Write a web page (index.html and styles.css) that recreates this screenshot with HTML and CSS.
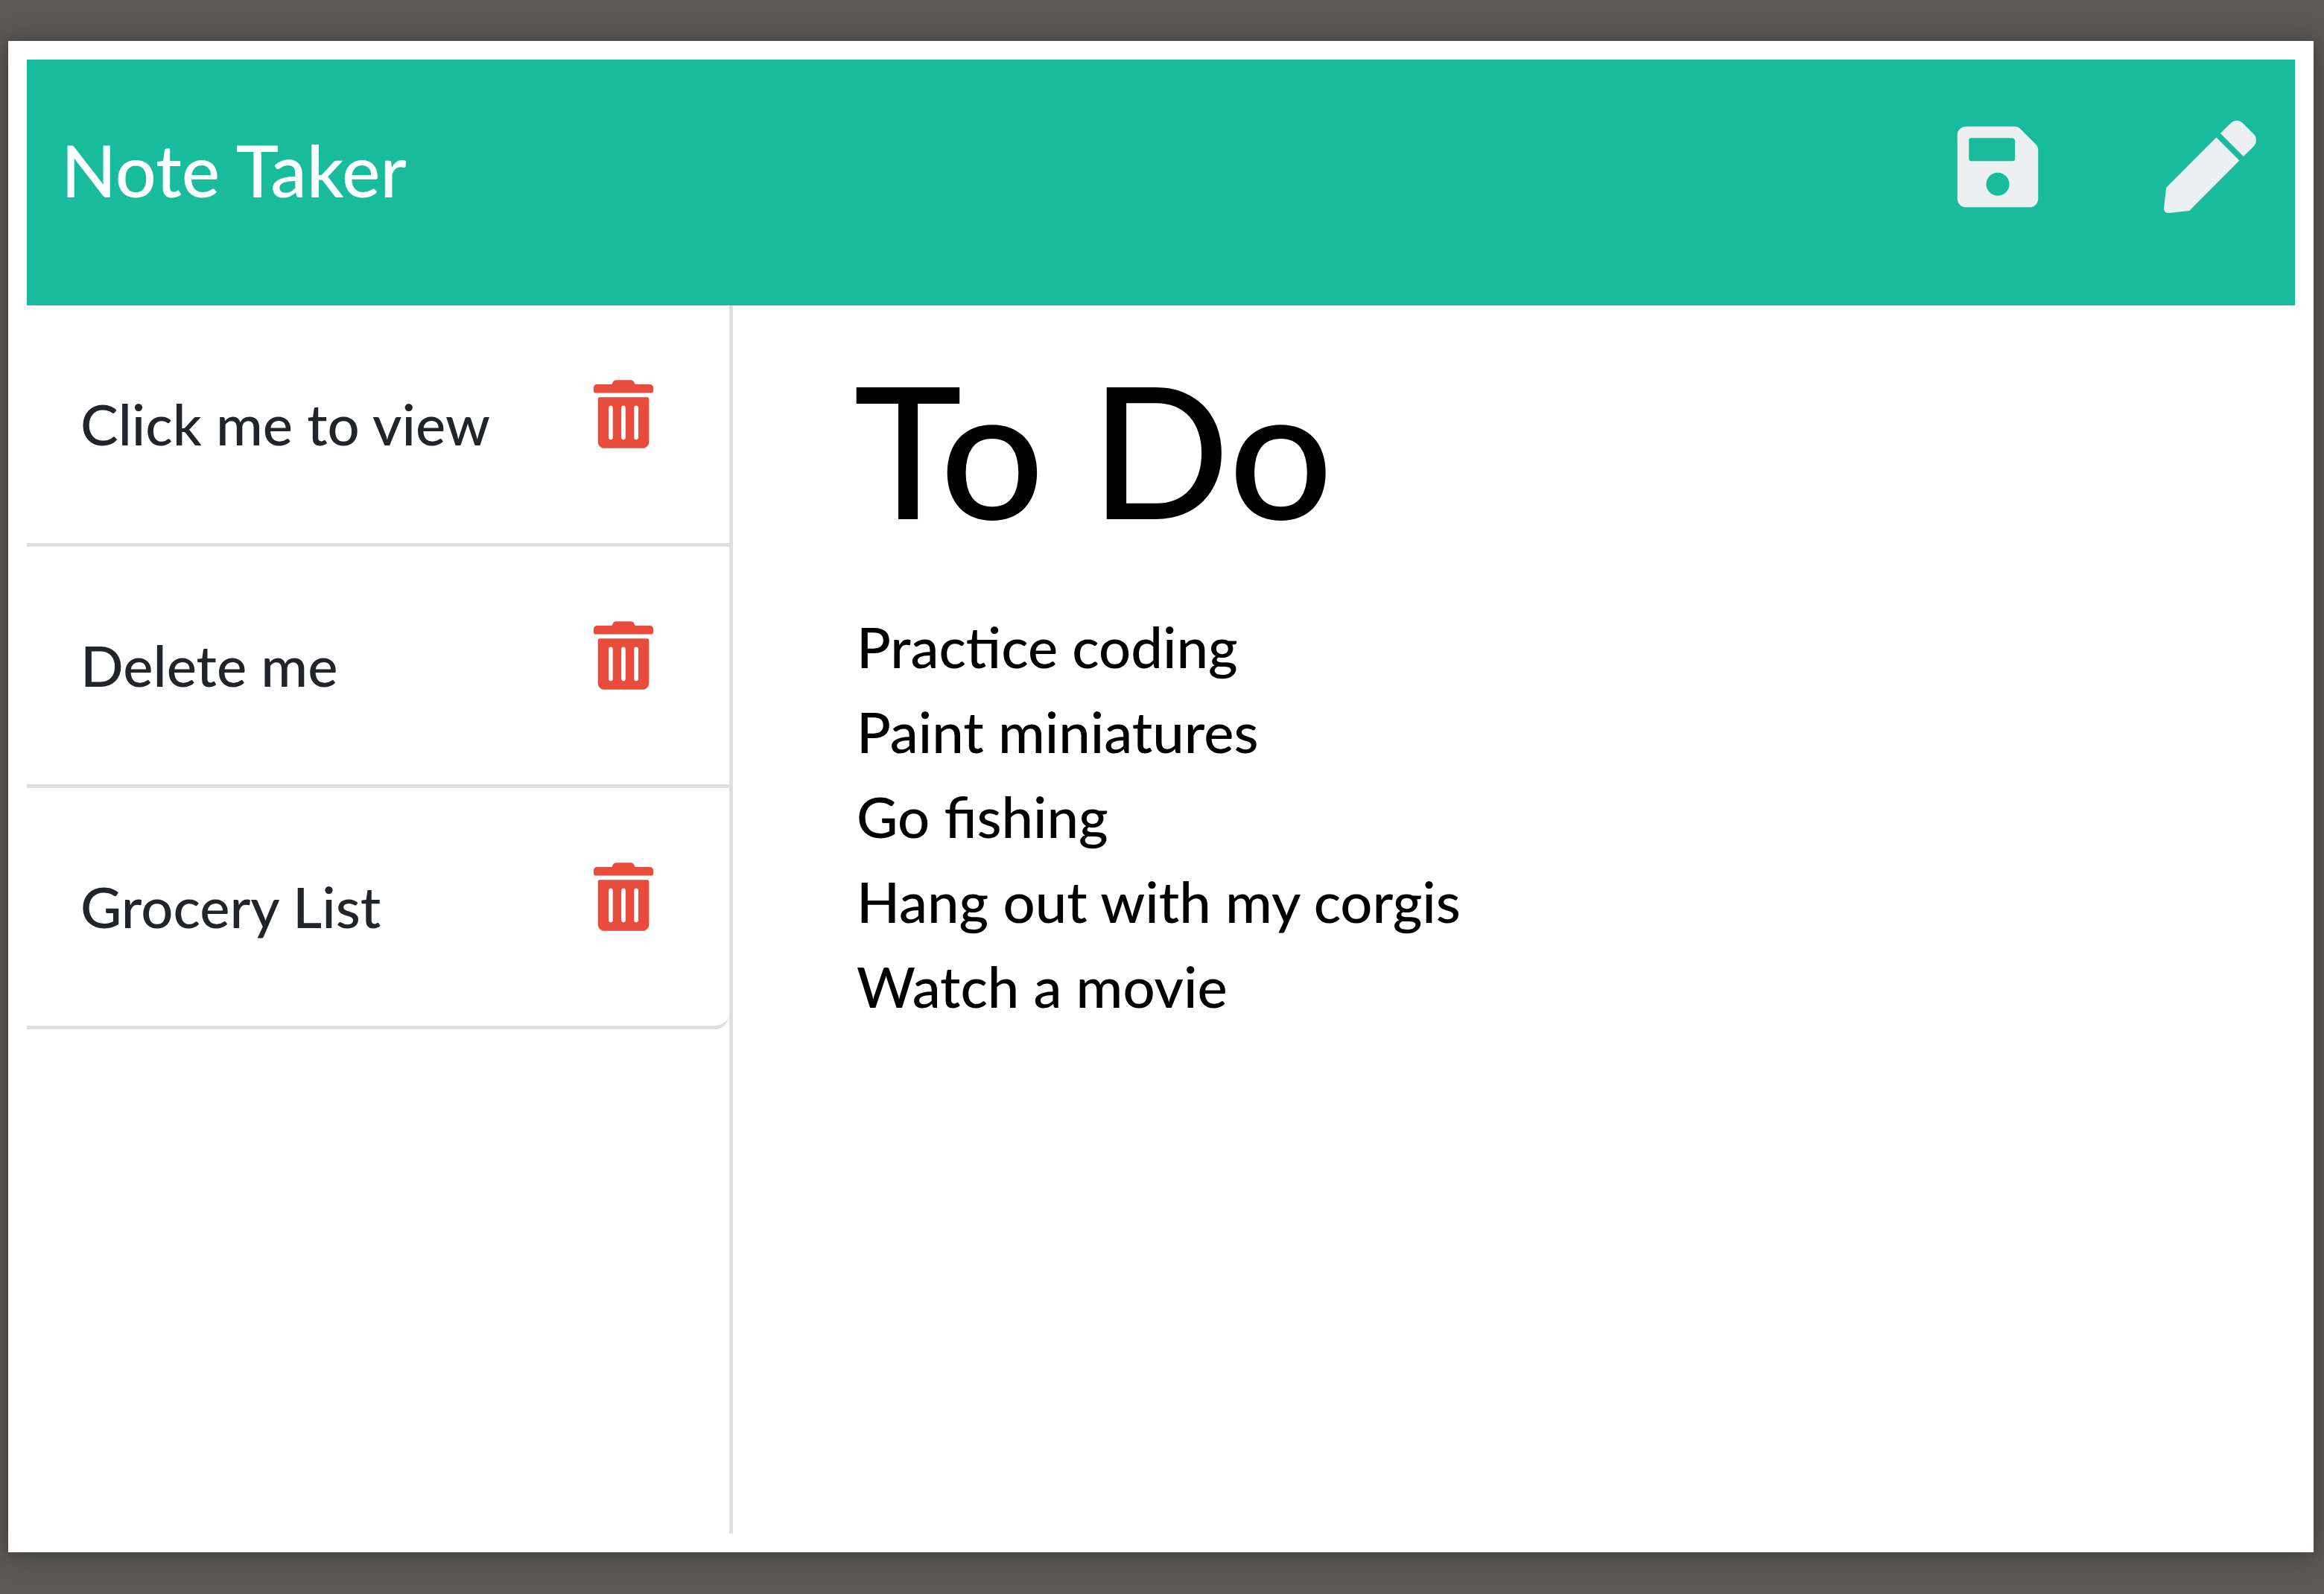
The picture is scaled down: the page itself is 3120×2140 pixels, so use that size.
FILE: index.html
```html
<!DOCTYPE html>
<html lang="en">
<head>
  <meta charset="utf-8">
  <meta name="viewport" content="width=device-width, initial-scale=1">
  <title>Note Taker</title>
  <link rel="stylesheet" href="styles.css">
</head>
<body>
  <svg class="sprite" aria-hidden="true">
    <symbol id="trash" viewBox="0 0 448 512">
      <path d="M0 84V56c0-13.3 10.7-24 24-24h112l9.4-18.7c4-8.2 12.3-13.3 21.4-13.3h114.3c9.1 0 17.4 5.1 21.5 13.3L312 32h112c13.3 0 24 10.7 24 24v28c0 6.6-5.4 12-12 12H12C5.4 96 0 90.6 0 84zm416 56v324c0 26.5-21.5 48-48 48H80c-26.5 0-48-21.5-48-48V140c0-6.6 5.4-12 12-12h360c6.6 0 12 5.4 12 12zm-272 68c0-8.8-7.2-16-16-16s-16 7.2-16 16v224c0 8.8 7.2 16 16 16s16-7.2 16-16V208zm96 0c0-8.8-7.2-16-16-16s-16 7.2-16 16v224c0 8.8 7.2 16 16 16s16-7.2 16-16V208zm96 0c0-8.8-7.2-16-16-16s-16 7.2-16 16v224c0 8.8 7.2 16 16 16s16-7.2 16-16V208z"/>
    </symbol>
  </svg>
  <div class="window">
    <header class="navbar">
      <a class="brand" href="#">Note Taker</a>
      <div class="actions">
        <button class="icon-button" type="button" aria-label="Save note">
          <svg class="icon-save" viewBox="0 0 448 512"><path d="M433.941 129.941l-83.882-83.882A48 48 0 0 0 316.118 32H48C21.49 32 0 53.49 0 80v352c0 26.51 21.49 48 48 48h352c26.51 0 48-21.49 48-48V163.882a48 48 0 0 0-14.059-33.941zM224 416c-35.346 0-64-28.654-64-64 0-35.346 28.654-64 64-64s64 28.654 64 64c0 35.346-28.654 64-64 64zm96-304.52V212c0 6.627-5.373 12-12 12H76c-6.627 0-12-5.373-12-12V108c0-6.627 5.373-12 12-12h228.52c3.183 0 6.235 1.264 8.485 3.515l3.48 3.48A11.996 11.996 0 0 1 320 111.48z"/></svg>
        </button>
        <button class="icon-button" type="button" aria-label="New note">
          <svg class="icon-pen" viewBox="0 0 512 512"><path d="M290.74 93.24l128.02 128.02-277.99 277.99-114.14 12.6C11.35 513.54-1.56 500.62.14 485.34l12.7-114.22 277.9-277.88zm207.2-19.06l-60.11-60.11c-18.75-18.75-49.16-18.75-67.91 0l-56.55 56.55 128.02 128.02 56.55-56.55c18.75-18.76 18.75-49.16 0-67.91z"/></svg>
        </button>
      </div>
    </header>
    <div class="columns">
      <nav class="sidebar" aria-label="Notes">
        <ul class="note-list">
          <li class="note-item"><a class="note-link" href="#">Click me to view</a><button class="delete-button" type="button" aria-label="Delete Click me to view"><svg class="icon-trash"><use href="#trash"/></svg></button></li>
          <li class="note-item"><a class="note-link" href="#">Delete me</a><button class="delete-button" type="button" aria-label="Delete Delete me"><svg class="icon-trash"><use href="#trash"/></svg></button></li>
          <li class="note-item"><a class="note-link" href="#">Grocery List</a><button class="delete-button" type="button" aria-label="Delete Grocery List"><svg class="icon-trash"><use href="#trash"/></svg></button></li>
        </ul>
      </nav>
      <main class="note">
        <input class="note-title" type="text" value="To Do" aria-label="Note title" readonly>
        <textarea class="note-text" rows="9" aria-label="Note text" readonly>Practice coding
Paint miniatures
Go fishing
Hang out with my corgis
Watch a movie</textarea>
      </main>
    </div>
  </div>
</body>
</html>
```
FILE: styles.css
```css
* {
  box-sizing: border-box;
}

body {
  margin: 0;
  min-height: 100vh;
  padding: 55px 14px 56px 11px;
  display: flex;
  background: #5c5856;
  color: #212529;
  font-family: Lato, "Liberation Sans", sans-serif;
  font-size: 76px;
  font-weight: 500;
}

button,
input,
textarea {
  margin: 0;
  padding: 0;
  border: 0;
  background: none;
  font-family: inherit;
  font-weight: inherit;
  color: inherit;
}

.sprite {
  display: none;
}

.window {
  flex: 1;
  min-width: 0;
  display: flex;
  flex-direction: column;
  padding: 25px;
  background: #fff;
  box-shadow: 0 2px 28px rgba(48, 50, 48, 0.8);
}

.navbar {
  display: flex;
  justify-content: space-between;
  align-items: flex-start;
  padding: 82px 52px 116px 46px;
  background: #18bc9c;
}

.brand {
  color: #fff;
  font-size: 97px;
  line-height: 132px;
  text-decoration: none;
}

.actions {
  display: flex;
  gap: 168px;
}

.icon-button,
.delete-button {
  display: flex;
}

.icon-save {
  width: 110px;
  height: 124px;
  fill: #ecf0f1;
}

.icon-pen {
  width: 124px;
  height: 124px;
  fill: #ecf0f1;
}

.columns {
  flex: 1;
  display: grid;
  grid-template-columns: 948px 1fr;
}

.sidebar {
  border-right: 5px solid #dfdfdf;
}

.note-list {
  margin: 0;
  padding: 0;
  list-style: none;
}

.note-item {
  display: flex;
  justify-content: space-between;
  align-items: flex-start;
  padding: 100px 102px 101px 72px;
  border-bottom: 5px solid #dfdfdf;
}

.note-item:last-child {
  border-bottom-right-radius: 20px;
}

.note-link {
  color: inherit;
  line-height: 118px;
  text-decoration: none;
}

.icon-trash {
  width: 80px;
  height: 92px;
  fill: #e74c3c;
}

.note {
  display: flex;
  flex-direction: column;
  min-width: 0;
  padding: 41px 160px 0 162px;
  color: #000;
}

.note-title {
  width: 100%;
  height: 300px;
  font-size: 246px;
}

.note-text {
  width: 100%;
  margin-top: 60px;
  padding-left: 4px;
  font-size: 76px;
  line-height: 114px;
  resize: none;
  overflow: hidden;
}
```
